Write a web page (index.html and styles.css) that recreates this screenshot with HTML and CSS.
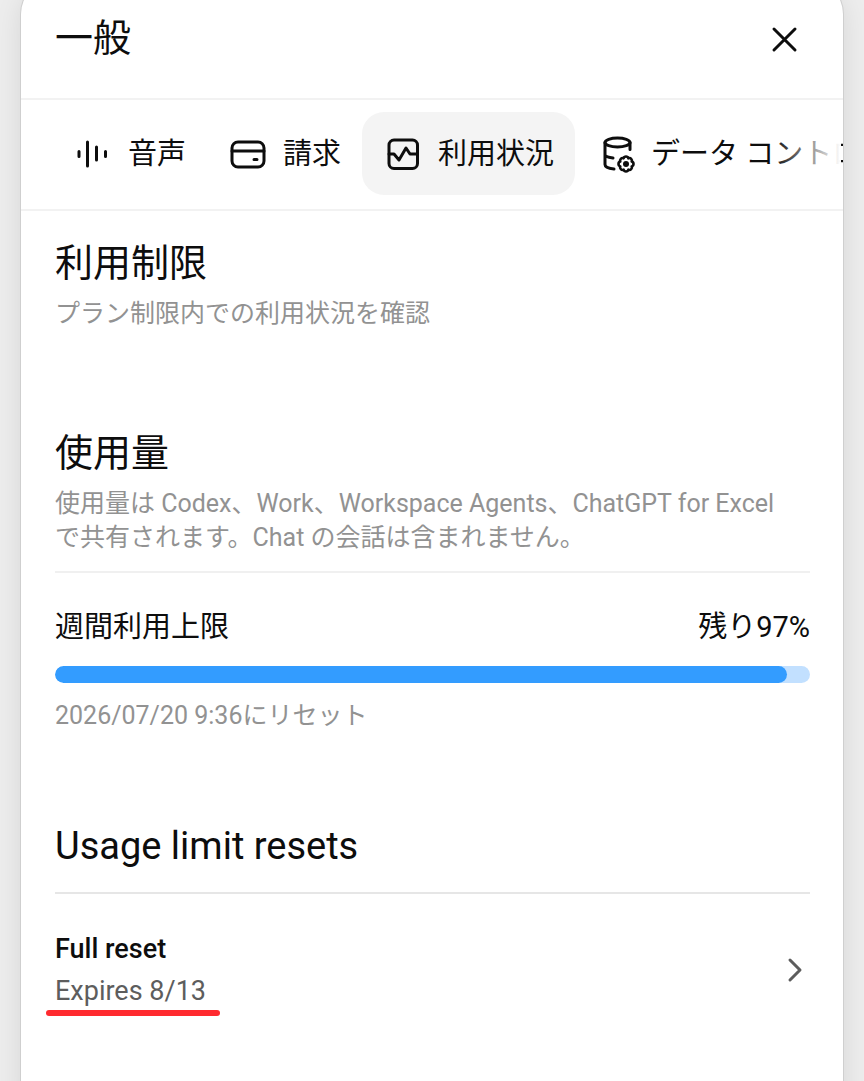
FILE: index.html
```html
<!DOCTYPE html>
<html lang="ja">
<head>
  <meta charset="UTF-8" />
  <meta name="viewport" content="width=device-width, initial-scale=1" />
  <title>一般</title>
  <link rel="stylesheet" href="styles.css">
</head>
<body>

  <main class="panel" role="dialog" aria-labelledby="panel-title">
    <header class="panel-header">
      <h1 id="panel-title">一般</h1>
      <button class="close-btn" type="button" aria-label="閉じる">
        <svg viewBox="0 0 32 32" width="32" height="32"><path d="M6 5l21 21M27 5L6 26" /></svg>
      </button>
    </header>

    <nav class="tabs" aria-label="設定">
      <button class="tab" type="button">
        <svg class="tab-icon" viewBox="0 0 42 42"><path d="M6 18.500v5M14.500 9v24M23.500 14v13M32.500 18.500v5" /></svg>
        音声
      </button>
      <button class="tab" type="button">
        <svg class="tab-icon" viewBox="0 0 42 42">
          <rect x="4" y="9" width="32" height="25" rx="6" />
          <path d="M4 18h32M26 26.500h3" />
        </svg>
        請求
      </button>
      <button class="tab active" type="button" aria-current="page">
        <svg class="tab-icon" viewBox="0 0 42 42">
          <rect x="6" y="7" width="28.500" height="28.500" rx="5" />
          <path d="M6 21h5l5 6 7-12 4 6h7" />
        </svg>
        利用状況
      </button>
      <button class="tab" type="button">
        <svg class="tab-icon" viewBox="0 0 42 42">
          <ellipse cx="21.500" cy="9.500" rx="12.500" ry="4.500" />
          <path d="M9 9.500v22c0 2.500 4 4 9 4.500M34 9.500v7M9 21.500c0 2 4 3 8 3.500" />
          <path class="gear" d="M27.600 25.300a2.500 2.500 0 0 1 4.800 0a2.500 2.500 0 0 1 3.300 3.300a2.500 2.500 0 0 1 0 4.800a2.500 2.500 0 0 1-3.300 3.300a2.500 2.500 0 0 1-4.800 0a2.500 2.500 0 0 1-3.300-3.300a2.500 2.500 0 0 1 0-4.800a2.500 2.500 0 0 1 3.300-3.300z" />
          <circle class="dot" cx="30" cy="31" r="3" />
        </svg>
        データ コントロール
      </button>
    </nav>

    <div class="content">
      <section class="block">
        <h2>利用制限</h2>
        <p class="note">プラン制限内での利用状況を確認</p>
      </section>

      <section class="block">
        <h2>使用量</h2>
        <p class="note">使用量は Codex、Work、Workspace Agents、ChatGPT for Excel<br>で共有されます。Chat の会話は含まれません。</p>
        <div class="usage">
          <div class="usage-row">
            <label for="weekly">週間利用上限</label>
            <span>残り97%</span>
          </div>
          <progress id="weekly" value="97" max="100"></progress>
          <p class="note">2026/07/20 9:36にリセット</p>
        </div>
      </section>

      <section class="block resets">
        <h2>Usage limit resets</h2>
        <button class="reset-item" type="button">
          <span class="reset-text">
            <strong>Full reset</strong>
            <span class="expires">Expires 8/13</span>
          </span>
          <svg class="chevron" viewBox="0 0 32 32" width="32" height="32"><path d="M12 6l10 10-10 10" /></svg>
        </button>
      </section>
    </div>
  </main>

</body>
</html>
```
FILE: styles.css
```css
* {
  box-sizing: border-box;
}
body {
  margin: 0;
  padding: 0 21px;
  height: 100vh;
  overflow: hidden;
  display: flow-root;
  font-family: Roboto, "Noto Sans CJK JP", sans-serif;
  color: #0d0d0d;
  background: #ededed;
}
h1, h2, p {
  margin: 0;
}
h1, h2 {
  font-size: 38px;
  line-height: 48px;
  font-weight: 400;
}
button {
  margin: 0;
  padding: 0;
  border: none;
  background: none;
  font: inherit;
  color: inherit;
  cursor: pointer;
}
svg {
  flex: none;
  fill: none;
  stroke: currentColor;
  stroke-width: 3;
  stroke-linecap: round;
  stroke-linejoin: round;
}

/* Panel, its top edge runs off the screen */
.panel {
  margin-top: -20px;
  min-height: calc(100vh + 60px);
  background: #fff;
  border-radius: 34px;
  box-shadow: 0 0 0 1px #cfcfcf, 0 8px 28px rgba(0, 0, 0, 0.1);
}
.panel-header {
  display: flex;
  justify-content: space-between;
  align-items: flex-start;
  height: 120px;
  padding: 34px 33px 0 34px;
  border-bottom: 2px solid #f2f2f2;
}
.close-btn {
  display: flex;
  padding: 10px;
}

/* Tabs */
.tabs {
  position: relative;
  display: flex;
  overflow: hidden;
  padding: 12px 0 14px 31px;
  border-bottom: 2px solid #f2f2f2;
}
/* fade over the tabs that scroll out on the right */
.tabs::after {
  content: "";
  position: absolute;
  top: 0;
  bottom: 0;
  right: 2px;
  width: 68px;
  background: linear-gradient(to right, rgba(255, 255, 255, 0), #fff);
}
.tab {
  flex: none;
  display: flex;
  align-items: center;
  gap: 13px;
  height: 83px;
  padding: 0 21px;
  border-radius: 22px;
  font-size: 29px;
  line-height: 44px;
  white-space: nowrap;
}
.tab.active {
  background: #f4f4f4;
}
.tab-icon {
  width: 42px;
  height: 42px;
}
.gear {
  stroke-width: 2.6;
}
.dot {
  fill: currentColor;
  stroke: none;
}

/* Content */
.content {
  padding: 28px 33px 0 34px;
}
.block + .block {
  margin-top: 98px;
}
.note {
  margin-top: 10px;
  font-size: 25px;
  line-height: 34px;
  color: #929292;
}
.usage {
  margin-top: 16px;
  padding-top: 32px;
  border-top: 2px solid #f0f0f0;
}
.usage-row {
  display: flex;
  justify-content: space-between;
  font-size: 29px;
  line-height: 44px;
}
progress {
  appearance: none;
  display: block;
  width: 100%;
  height: 17px;
  margin: 17px 0 16px;
  border: none;
  border-radius: 9px;
  overflow: hidden;
  background: #c2e0ff;
}
progress::-webkit-progress-bar {
  background: #c2e0ff;
}
progress::-webkit-progress-value {
  background: #339cff;
  border-radius: 9px;
}
progress::-moz-progress-bar {
  background: #339cff;
  border-radius: 9px;
}
.block.resets {
  margin-top: 89px;
}
.reset-item {
  display: flex;
  justify-content: space-between;
  align-items: center;
  width: 100%;
  margin-top: 22px;
  padding: 34px 0;
  border-top: 2px solid #e6e6e6;
  font-size: 27px;
  line-height: 42px;
  text-align: left;
}
.reset-text {
  position: relative;
  display: flex;
  flex-direction: column;
}
.reset-text strong {
  font-weight: 500;
}
.expires {
  color: #5d5d5d;
}
/* red marker under the expiry date */
.reset-text::after {
  content: "";
  position: absolute;
  left: -9px;
  right: -14px;
  bottom: -4px;
  height: 6px;
  border-radius: 3px;
  background: #ff2a2f;
}
.chevron {
  color: #5d5d5d;
}
```
